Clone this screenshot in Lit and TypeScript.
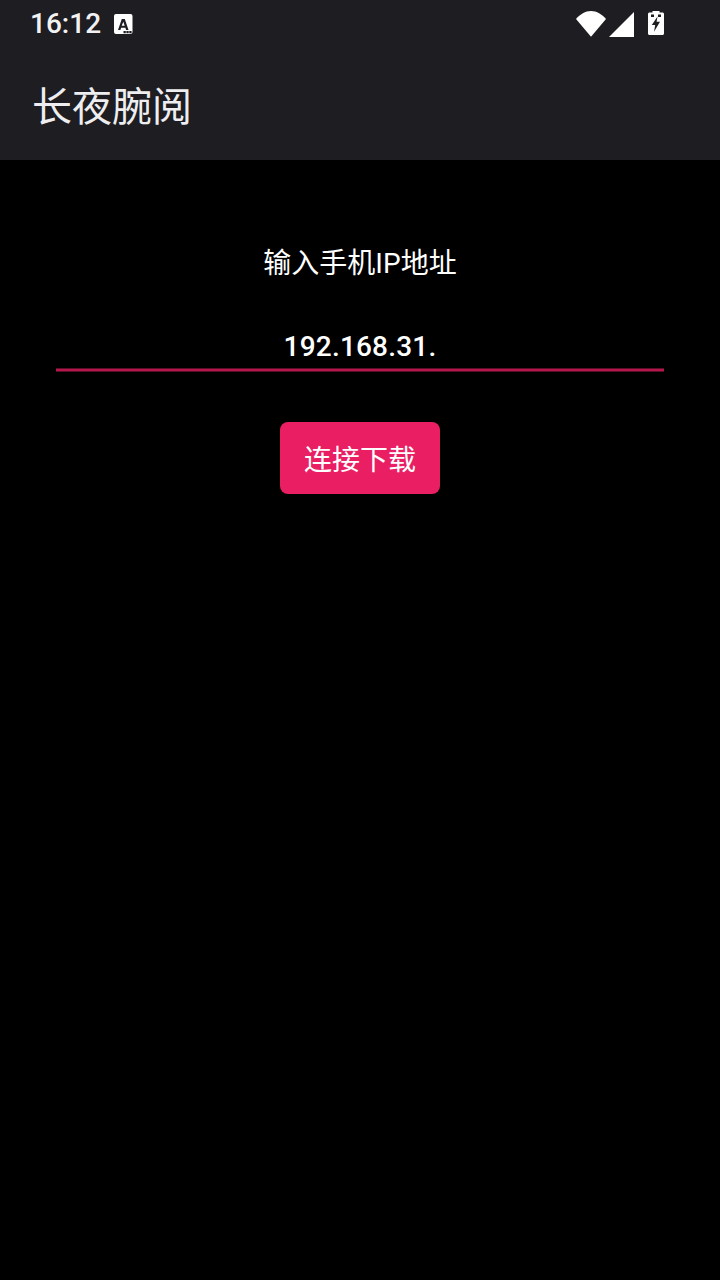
import { LitElement, html, css } from 'lit';
import { customElement, state } from 'lit/decorators.js';

@customElement('app-root')
export class AppRoot extends LitElement {
  @state() ip = '192.168.31.';

  static styles = css`
    :host {
      display: block;
      width: 720px;
      height: 1280px;
      background: #000;
      color: #fff;
      font-family: Roboto, "Noto Sans CJK SC", sans-serif;
    }

    .status {
      height: 48px;
      background: #1d1d22;
      display: flex;
      align-items: center;
      padding: 0 56px 0 30px;
      box-sizing: border-box;
    }

    .time {
      font-size: 28px;
      font-weight: 500;
      color: #f2f2f2;
      line-height: 48px;
    }

    .notif {
      margin-left: 13px;
      display: block;
    }

    .spacer {
      flex: 1;
    }

    .signal {
      margin: 1px 0 0 3px;
    }

    .battery {
      margin: 0 0 2px 14px;
    }

    .appbar {
      height: 112px;
      background: #1d1d22;
      display: flex;
      align-items: center;
      padding: 0 32px 1px;
      box-sizing: border-box;
      font-size: 40px;
      color: #eeeef0;
    }

    .form {
      display: flex;
      flex-direction: column;
      align-items: center;
      padding: 82px 56px 0;
    }

    .label {
      font-size: 28px;
      line-height: 44px;
    }

    .field {
      margin-top: 36px;
      width: 100%;
      height: 46px;
      display: flex;
      align-items: center;
    }

    .underline {
      width: 100%;
      height: 4px;
      background: linear-gradient(
        #5c0d29 0 1px,
        #b5174d 1px 3px,
        #5c0d29 3px 4px
      );
    }

    input {
      width: 100%;
      height: 48px;
      margin-top: 2px;
      background: transparent;
      border: none;
      outline: none;
      padding: 0;
      color: #fff;
      text-align: center;
      font-family: inherit;
      font-size: 28px;
      font-weight: 500;
      letter-spacing: 0.2px;
    }

    button {
      margin-top: 50px;
      width: 160px;
      height: 72px;
      border: none;
      border-radius: 8px;
      background: #e91e63;
      color: #fff;
      font-family: inherit;
      font-size: 28px;
      padding: 0;
    }
  `;

  render() {
    return html`
      <div class="status">
        <span class="time">16:12</span>
        <svg class="notif" width="19" height="20" viewBox="0 0 19 20">
          <rect width="18.500" height="20" rx="2" fill="#fff" />
          <path fill="#1d1d22" d="M7.800 5h3l3.700 11h-2.400l-.7-2.300H7.100L6.400 16H4zm1.500 2.800-1.600 4h3zM9.500 17h2.300v2.300H9.500zM12.400 17h2.300v2.300h-2.300zM15.300 17h2.300v2.300h-2.300z" />
        </svg>
        <span class="spacer"></span>
        <svg class="wifi" width="30" height="26" viewBox="0 0 30 26">
          <path fill="#fff" d="M15 25.700 0 8C4 3.500 9.300 0 15 0s11 3.500 15 8z" />
        </svg>
        <svg class="signal" width="25" height="25" viewBox="0 0 25 25">
          <path fill="#fff" d="M25 0v25H0z" />
        </svg>
        <svg class="battery" width="16" height="24" viewBox="0 0 16 24">
          <path fill="#fff" fill-rule="evenodd" d="M4.500 0h7v1.500h3c.8 0 1.500.7 1.500 1.500v19.500c0 .8-.7 1.500-1.500 1.500h-13C.7 24 0 23.300 0 22.500V3c0-.8.7-1.500 1.500-1.500h3zM3 3.500V6h3V3.500zM10 3.500V6h3V3.500zM9.500 5.500 3.800 14h3.400l-1.200 6.800 6-10H8.600z" />
        </svg>
      </div>
      <div class="appbar">长夜腕阅</div>
      <div class="form">
        <div class="label">输入手机IP地址</div>
        <div class="field"><input .value=${this.ip} /></div>
        <div class="underline"></div>
        <button>连接下载</button>
      </div>
    `;
  }
}
